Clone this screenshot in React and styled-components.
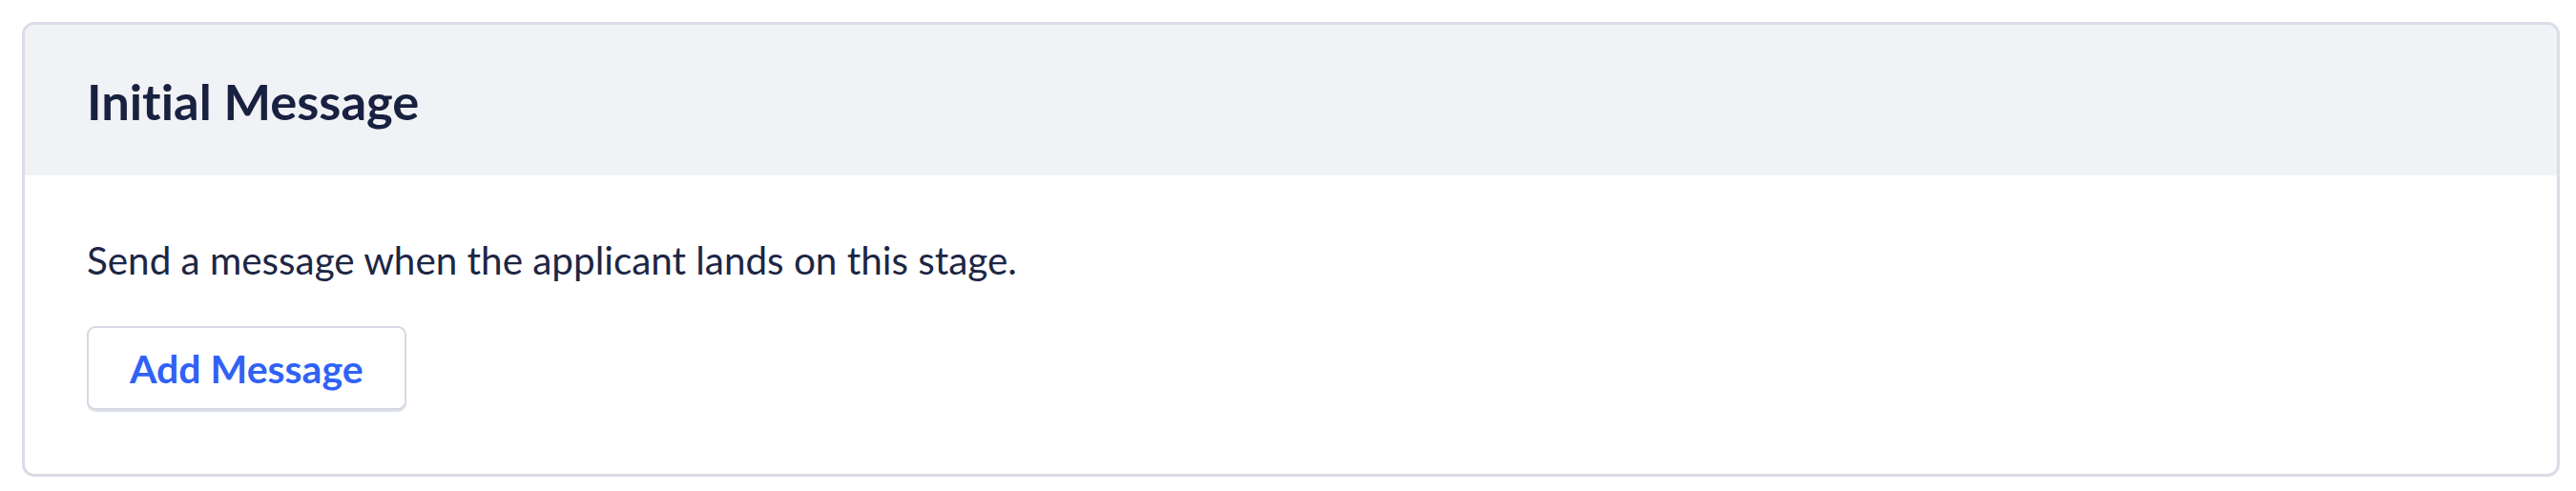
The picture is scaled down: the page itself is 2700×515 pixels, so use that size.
import React from 'react'
import styled, { createGlobalStyle } from 'styled-components'

const GlobalStyle = createGlobalStyle`
	body {
		margin: 0;
		background: #ffffff;
		font-family: Lato, 'Noto Sans', sans-serif;
		font-variant-ligatures: none;
	}
`

const Page = styled.div`
	padding: 23px 17px 0 23px;
`

const Card = styled.section`
	border: 3px solid #dadce7;
	border-radius: 13px;
	overflow: hidden;
	background: #ffffff;
`

const Header = styled.header`
	height: 158px;
	display: flex;
	align-items: center;
	padding: 0 65px;
	background: #f1f2f6;
`

const Title = styled.h2`
	margin: 0;
	font-size: 52.5px;
	font-weight: 700;
	color: #18213f;
`

const Body = styled.div`
	padding: 65px 65px 67px;
	display: flex;
	flex-direction: column;
	align-items: flex-start;
	gap: 45px;
`

const Description = styled.p`
	margin: 0;
	font-size: 40.4px;
	line-height: 48px;
	color: #1d2644;
`

const Button = styled.button`
	height: 88px;
	padding: 0 43px;
	font-family: inherit;
	font-size: 41px;
	font-weight: 700;
	color: #3062f5;
	background: #ffffff;
	border: 2px solid #d6d9e4;
	border-radius: 9px;
	box-shadow: 0 2px 0 #dfe1ea;
	cursor: pointer;
`

const App = () => {
	return (
		<Page>
			<GlobalStyle />
			<Card>
				<Header>
					<Title>Initial Message</Title>
				</Header>
				<Body>
					<Description>Send a message when the applicant lands on this stage.</Description>
					<Button>Add Message</Button>
				</Body>
			</Card>
		</Page>
	)
}

export default App
